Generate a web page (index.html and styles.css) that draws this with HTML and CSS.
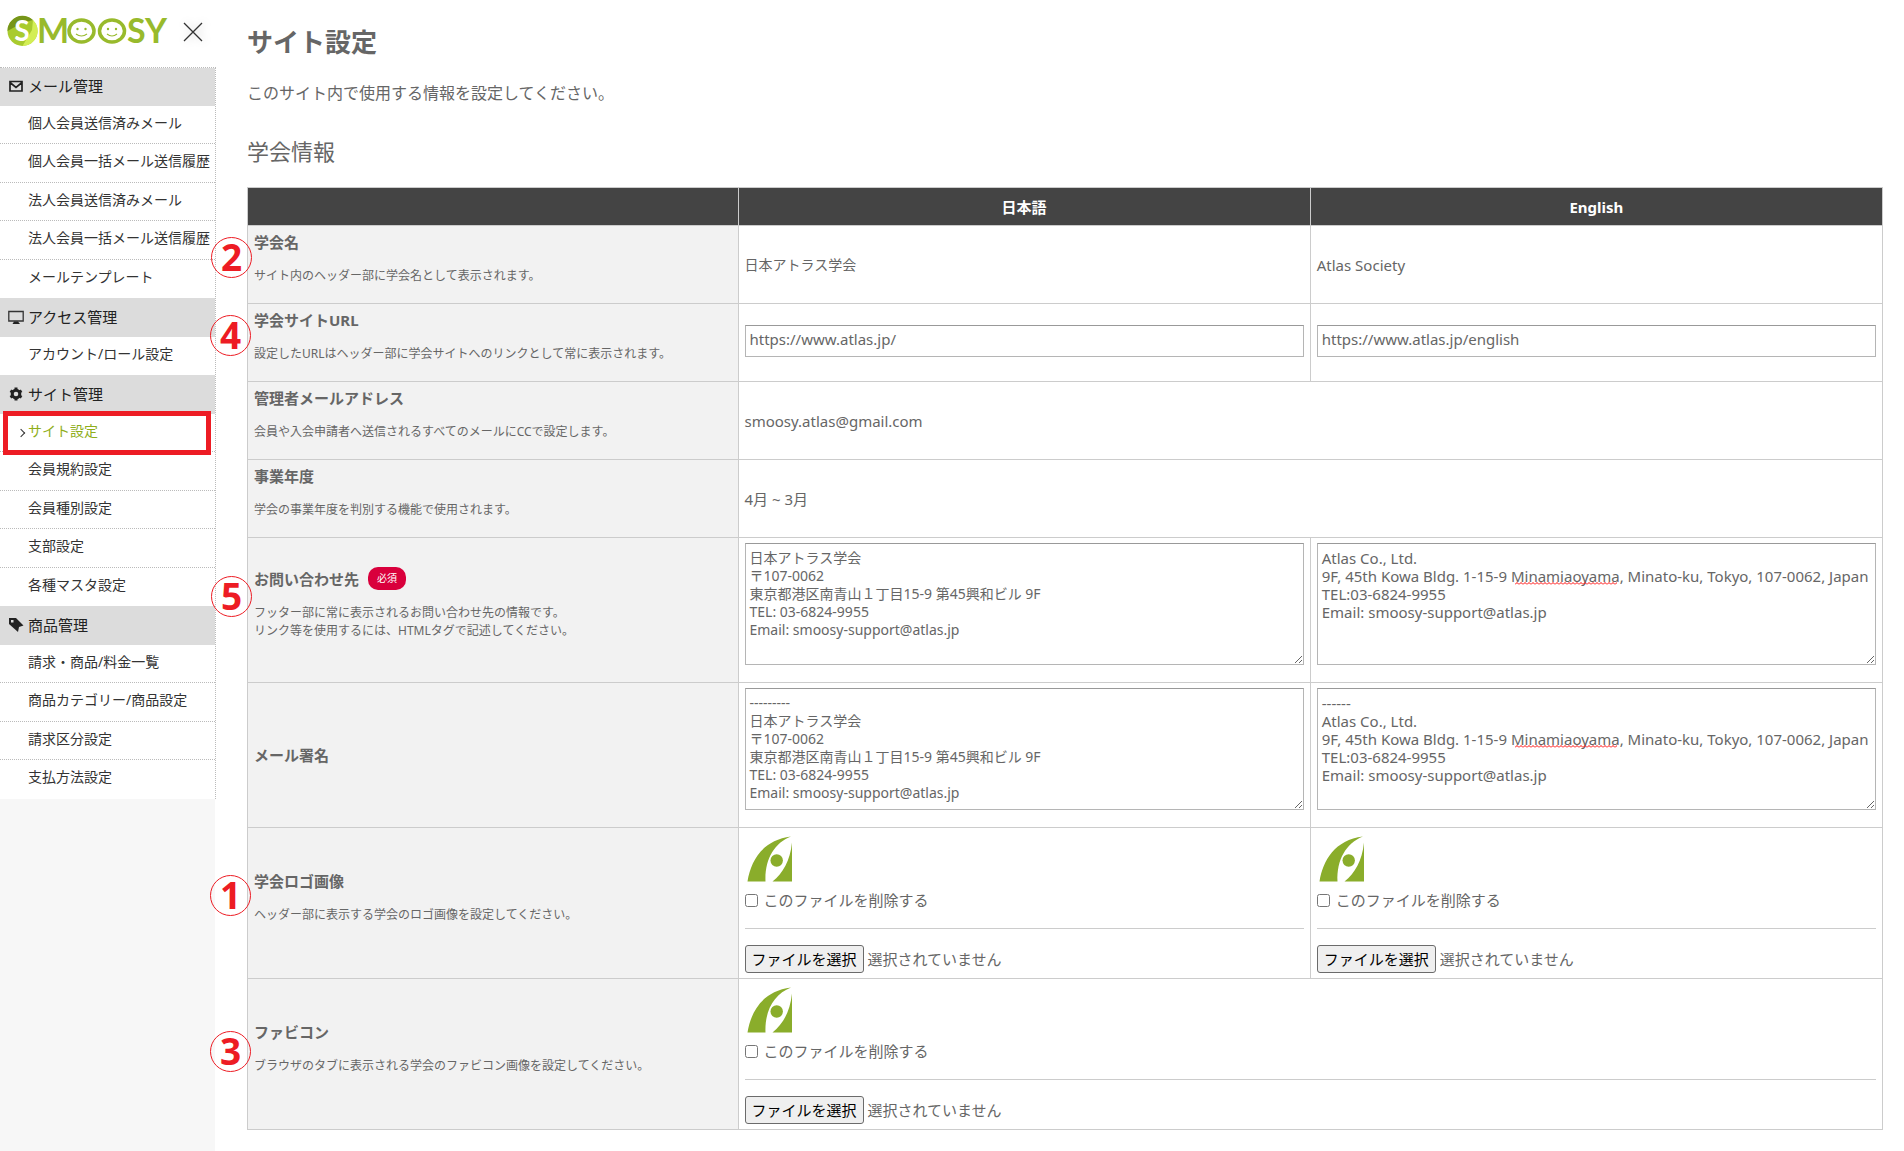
FILE: index.html
```html
<!DOCTYPE html>
<html lang="ja">
<head>
<meta charset="utf-8">
<title>サイト設定 | SMOOSY</title>
<link rel="stylesheet" href="styles.css">
</head>
<body>
<svg class="defs" aria-hidden="true">
  <symbol id="atlas-mark" viewBox="0 0 50 50">
    <g fill="#8aad2b">
      <path d="M2.500 47.500C6 26 18 6 46 2.500C29 9 19.500 26 20.500 47.500Z"/>
      <path d="M47 8.500V47.500H27.500C38 39 45 27 47 8.500Z"/>
      <circle cx="31.700" cy="26.500" r="6.200"/>
    </g>
  </symbol>
  <pattern id="wave" width="4" height="3" patternUnits="userSpaceOnUse">
    <path d="M0 2.500L2 .5L4 2.500" fill="none" stroke="#f00"/>
  </pattern>
</svg>
<div class="layout">
  <aside class="sidebar">
    <header class="brand">
      <svg class="logo" viewBox="0 0 164 34" role="img" aria-label="SMOOSY">
        <circle cx="16.500" cy="16" r="15" fill="#a9cb2e"/>
        <path d="M1.500 16A15 15 0 0 1 27 5L16 8Z" fill="#76951a"/>
        <path d="M16.500 31A15 15 0 0 0 27 5L26 15Z" fill="#d3ee55"/>
        <text class="logo-ball" x="16" y="26" text-anchor="middle">S</text>
        <text class="logo-text" x="31" y="28">M</text>
        <g fill="none" stroke="#98ba2c">
          <ellipse cx="75.500" cy="16" rx="12.500" ry="11" stroke-width="3.500"/>
          <ellipse cx="106" cy="16" rx="12.500" ry="11" stroke-width="3.500"/>
          <path d="M70 19Q75.500 23 81 19M101 19Q106 23 111 19" stroke-width="1.200"/>
        </g>
        <g fill="#98ba2c"><circle cx="71.500" cy="14" r="1.200"/><circle cx="79.500" cy="14" r="1.200"/><circle cx="102" cy="14" r="1.200"/><circle cx="110" cy="14" r="1.200"/></g>
        <text class="logo-text" x="121" y="28">S</text>
        <text class="logo-text" x="139" y="28">Y</text>
      </svg>
      <button class="close" type="button" aria-label="閉じる">
        <svg viewBox="0 0 20 20" width="20" height="20"><path d="M1 1L19 19M19 1L1 19" stroke="#333" stroke-width="1.300"/></svg>
      </button>
    </header>
    <nav class="menu">
      <h3><svg viewBox="0 0 16 16"><path d="M2 3.500H14V13H2ZM2 4.500L8 9.500L14 4.500" fill="none" stroke="#222" stroke-width="1.700"/></svg>メール管理</h3>
      <ul>
        <li><a href="#">個人会員送信済みメール</a></li>
        <li><a href="#">個人会員一括メール送信履歴</a></li>
        <li><a href="#">法人会員送信済みメール</a></li>
        <li><a href="#">法人会員一括メール送信履歴</a></li>
        <li><a href="#">メールテンプレート</a></li>
      </ul>
      <h3><svg viewBox="0 0 16 16"><path d="M.8 2.500H15.200V12H.8Z" fill="none" stroke="#333" stroke-width="1.300"/><path d="M6 12.500H10L12 15H4.500Z" fill="#222"/></svg>アクセス管理</h3>
      <ul>
        <li><a href="#">アカウント/ロール設定</a></li>
      </ul>
      <h3><svg viewBox="0 0 16 16"><circle cx="8" cy="8" r="3.800" fill="none" stroke="#222" stroke-width="3"/><path d="M8 1.500V4M8 12V14.500M2.400 4.800L4.500 6M11.500 10L13.600 11.200M2.400 11.200L4.500 10M11.500 6L13.600 4.800" stroke="#222" stroke-width="3"/></svg>サイト管理</h3>
      <ul>
        <li class="current"><a href="#" aria-current="page">サイト設定</a></li>
        <li><a href="#">会員規約設定</a></li>
        <li><a href="#">会員種別設定</a></li>
        <li><a href="#">支部設定</a></li>
        <li><a href="#">各種マスタ設定</a></li>
      </ul>
      <h3><svg viewBox="0 0 16 16"><path fill="#222" fill-rule="evenodd" d="M1 1H8L15.500 8.500L11 10L10 15L1 7ZM3 3V5.500H5.500V3Z"/></svg>商品管理</h3>
      <ul>
        <li><a href="#">請求・商品/料金一覧</a></li>
        <li><a href="#">商品カテゴリー/商品設定</a></li>
        <li><a href="#">請求区分設定</a></li>
        <li><a href="#">支払方法設定</a></li>
      </ul>
    </nav>
  </aside>

  <main class="content">
    <h1>サイト設定</h1>
    <p class="lead">このサイト内で使用する情報を設定してください。</p>
    <h2>学会情報</h2>
    <table class="settings">
      <thead>
        <tr><td></td><th scope="col">日本語</th><th scope="col">English</th></tr>
      </thead>
      <tbody>
        <tr>
          <th scope="row"><span class="marker">2</span><div class="name">学会名</div><p>サイト内のヘッダー部に学会名として表示されます。</p></th>
          <td>日本アトラス学会</td>
          <td class="latin">Atlas Society</td>
        </tr>
        <tr>
          <th scope="row"><span class="marker marker-left">4</span><div class="name">学会サイトURL</div><p>設定したURLはヘッダー部に学会サイトへのリンクとして常に表示されます。</p></th>
          <td class="latin"><input class="text" type="text" aria-label="学会サイトURL 日本語" value="https://www.atlas.jp/"></td>
          <td class="latin"><input class="text" type="text" aria-label="学会サイトURL English" value="https://www.atlas.jp/english"></td>
        </tr>
        <tr>
          <th scope="row"><div class="name">管理者メールアドレス</div><p>会員や入会申請者へ送信されるすべてのメールにCCで設定します。</p></th>
          <td class="latin" colspan="2">smoosy.atlas@gmail.com</td>
        </tr>
        <tr>
          <th scope="row"><div class="name">事業年度</div><p>学会の事業年度を判別する機能で使用されます。</p></th>
          <td class="latin" colspan="2">4月 ~ 3月</td>
        </tr>
        <tr>
          <th scope="row"><span class="marker marker-high">5</span><div class="name">お問い合わせ先<span class="required">必須</span></div><p>フッター部に常に表示されるお問い合わせ先の情報です。<br>リンク等を使用するには、HTMLタグで記述してください。</p></th>
          <td><textarea aria-label="お問い合わせ先 日本語">日本アトラス学会
〒107-0062
東京都港区南青山１丁目15-9 第45興和ビル 9F
TEL: 03-6824-9955
Email: smoosy-support@atlas.jp</textarea></td>
          <td class="latin"><div class="field"><textarea aria-label="お問い合わせ先 English">Atlas Co., Ltd.
9F, 45th Kowa Bldg. 1-15-9 Minamiaoyama, Minato-ku, Tokyo, 107-0062, Japan
TEL:03-6824-9955
Email: smoosy-support@atlas.jp</textarea><svg class="misspelt" aria-hidden="true"><rect width="100%" height="3" fill="url(#wave)"/></svg></div></td>
        </tr>
        <tr>
          <th scope="row"><div class="name">メール署名</div></th>
          <td><textarea aria-label="メール署名 日本語">---------
日本アトラス学会
〒107-0062
東京都港区南青山１丁目15-9 第45興和ビル 9F
TEL: 03-6824-9955
Email: smoosy-support@atlas.jp</textarea></td>
          <td class="latin"><div class="field"><textarea aria-label="メール署名 English">------
Atlas Co., Ltd.
9F, 45th Kowa Bldg. 1-15-9 Minamiaoyama, Minato-ku, Tokyo, 107-0062, Japan
TEL:03-6824-9955
Email: smoosy-support@atlas.jp</textarea><svg class="misspelt misspelt-line3" aria-hidden="true"><rect width="100%" height="3" fill="url(#wave)"/></svg></div></td>
        </tr>
        <tr>
          <th scope="row"><span class="marker marker-left">1</span><div class="name">学会ロゴ画像</div><p>ヘッダー部に表示する学会のロゴ画像を設定してください。</p></th>
          <td>
            <svg class="mark" role="img" aria-label="ロゴ"><use href="#atlas-mark"/></svg>
            <label class="check"><input type="checkbox">このファイルを削除する</label>
            <hr>
            <div class="file"><input type="file" hidden><button type="button">ファイルを選択</button><span>選択されていません</span></div>
          </td>
          <td>
            <svg class="mark" role="img" aria-label="ロゴ"><use href="#atlas-mark"/></svg>
            <label class="check"><input type="checkbox">このファイルを削除する</label>
            <hr>
            <div class="file"><input type="file" hidden><button type="button">ファイルを選択</button><span>選択されていません</span></div>
          </td>
        </tr>
        <tr>
          <th scope="row"><span class="marker marker-left marker-low">3</span><div class="name">ファビコン</div><p>ブラウザのタブに表示される学会のファビコン画像を設定してください。</p></th>
          <td colspan="2">
            <svg class="mark" role="img" aria-label="ファビコン"><use href="#atlas-mark"/></svg>
            <label class="check"><input type="checkbox">このファイルを削除する</label>
            <hr>
            <div class="file"><input type="file" hidden><button type="button">ファイルを選択</button><span>選択されていません</span></div>
          </td>
        </tr>
      </tbody>
    </table>
  </main>
</div>
<script src="script.js"></script>
</body>
</html>
```
FILE: styles.css
```css
* { box-sizing: border-box; }

body {
  margin: 0;
  background: #fff;
  color: #666;
  font: 15px/22px "Noto Sans", "Noto Sans CJK JP", sans-serif;
}

.defs { position: absolute; width: 0; height: 0; }

.layout {
  display: flex;
  min-height: 100vh;
}

/* Sidebar */
.sidebar {
  flex: 0 0 216px;
  background: linear-gradient(90deg, #f7f7f7 215px, #fff 215px);
}

.brand {
  display: flex;
  align-items: center;
  gap: 13px;
  height: 67px;
  padding: 0 0 3px 6px;
  background: #fff;
}

.logo { width: 164px; height: 34px; overflow: visible; }
.logo text { font-family: Lato, sans-serif; font-weight: 700; }
.logo-text { font-size: 34px; fill: #98ba2c; }
.logo-ball { font-size: 28px; fill: #fff; }

.close {
  padding: 0;
  border: 0;
  background: none;
  line-height: 0;
  filter: drop-shadow(2px 0 4px #ccc);
}

.menu {
  border-top: 1px dotted #bbb;
  border-right: 1px dotted #bbb;
  background: #fff;
}

.menu h3 {
  display: flex;
  align-items: center;
  gap: 4px;
  height: 39px;
  margin: 0;
  padding: 0 0 2px 8px;
  background: #dcdcdc;
  color: #222;
  font-size: 15px;
  font-weight: 400;
}

.menu h3:first-child { height: 38px; }
.menu h3 svg { width: 16px; height: 16px; }
.menu ul { margin: 0; padding: 0; list-style: none; }

.menu li {
  position: relative;
  height: 38px;
  border-bottom: 1px dotted #bbb;
}

.menu li:nth-child(even) { height: 39px; }
.menu li:last-child { border-color: transparent; }

.menu a {
  display: block;
  padding: 6px 0 0 28px;
  color: #333;
  font-size: 14px;
  text-decoration: none;
  white-space: nowrap;
}

.menu .current a { color: #8fae1b; }

.menu .current a::before {
  content: "";
  position: absolute;
  left: 18px;
  top: 16px;
  width: 5px;
  height: 5px;
  border: solid #333;
  border-width: 1px 1px 0 0;
  transform: rotate(45deg);
}

.menu .current::after {
  content: "";
  position: absolute;
  inset: -3px 4px -4px 3px;
  z-index: 1;
  border: 5px solid #ed1c24;
}

/* Main area */
.content {
  flex: 1;
  min-width: 0;
  padding: 24px 21px 20px 31px;
}

h1 { margin: 0; font-size: 26px; line-height: 36px; }
.lead { margin: 22px 0 0; font-size: 16px; line-height: 22px; }
h2 { margin: 32px 0 21px; font-size: 22px; font-weight: 400; line-height: 30px; }

.settings {
  width: 100%;
  border-collapse: collapse;
  table-layout: fixed;
}

.settings th, .settings td {
  padding: 5px 6px;
  border: 1px solid #ccc;
  text-align: left;
}

.settings td { font-size: 14px; }
.settings .latin { font-size: 15px; }

.settings thead th, .settings thead td {
  height: 38px;
  background: #444;
  color: #fff;
  font-size: 15px;
  text-align: center;
}

.settings thead td { width: 30%; }

.settings tbody th {
  position: relative;
  background: #f2f2f2;
}

.settings p {
  margin: 14px 0 13px;
  font-size: 12px;
  font-weight: 400;
  line-height: 18px;
}

.name { display: flex; align-items: center; gap: 9px; }

.required {
  padding: 0 9px;
  border-radius: 10px;
  background: #d9003c;
  color: #fff;
  font-size: 10px;
  font-weight: 400;
  line-height: 23px;
}

/* Numbered callouts beside the rows */
.marker {
  position: absolute;
  left: -37px;
  top: calc(50% - 28px);
  z-index: 1;
  width: 41px;
  height: 41px;
  border: 1px solid #ed1c24;
  border-radius: 50%;
  color: #ed1c24;
  font-size: 37px;
  font-weight: 700;
  line-height: 38px;
  text-align: center;
}

.marker-left { left: -38px; }
.marker-high { top: calc(50% - 34px); }
.marker-low { top: calc(50% - 23px); }

.text, textarea {
  display: block;
  width: 100%;
  border: 1px solid #b5b5b5;
  border-top-color: #999;
  border-radius: 0;
  background: #fff;
  color: #666;
  font: inherit;
}

.text { height: 32px; margin-bottom: 3px; padding: 0 4px 4px; }

textarea {
  height: 122px;
  margin-bottom: 12px;
  padding: 5px 4px;
  line-height: 18px;
  overflow: hidden;
}

.latin textarea { padding-right: 0; }

.field { position: relative; }

/* Red wave under the word the spell checker does not know */
.misspelt {
  position: absolute;
  left: 198px;
  top: 39px;
  width: 102px;
  height: 3px;
}

.misspelt-line3 { top: 57px; }

.mark { display: block; width: 50px; height: 50px; margin-top: 1px; }

.check {
  display: flex;
  align-items: center;
  gap: 6px;
  margin-top: 5px;
  font-size: 15px;
}

.check input { width: 13px; height: 13px; margin: 0; }

hr {
  margin: 17px 0 16px;
  border: 0;
  border-top: 1px solid #ccc;
}

.file {
  display: flex;
  align-items: center;
  gap: 4px;
  font-size: 15px;
}

.file button {
  height: 28px;
  padding: 0 6px;
  border: 1px solid #6b6b6b;
  border-radius: 3px;
  background: #efefef;
  color: #000;
  font: inherit;
}
```
FILE: script.js
```js
// Each "choose file" button opens the file input beside it and shows its name.
document.querySelectorAll('.file').forEach((box) => {
  const input = box.querySelector('input');
  box.querySelector('button').addEventListener('click', () => input.click());
  input.addEventListener('change', () => {
    box.querySelector('span').textContent = input.files.length ? input.files[0].name : '選択されていません';
  });
});
```
